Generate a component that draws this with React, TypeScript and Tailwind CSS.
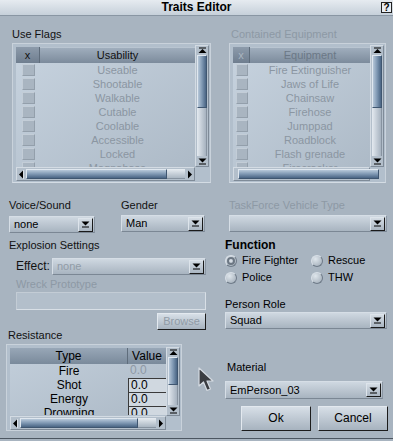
import React from "react";

const useFlags = [
  "Useable",
  "Shootable",
  "Walkable",
  "Cutable",
  "Coolable",
  "Accessible",
  "Locked",
  "Magnabase",
];

const equipment = [
  "Fire Extinguisher",
  "Jaws of Life",
  "Chainsaw",
  "Firehose",
  "Jumppad",
  "Roadblock",
  "Flash grenade",
  "Firecracker",
];

const resistance = [
  { type: "Fire", value: "0.0", disabled: true },
  { type: "Shot", value: "0.0" },
  { type: "Energy", value: "0.0" },
  { type: "Drowning", value: "0.0" },
];

const Tri = ({ down = false, dir }: { down?: boolean; dir?: "left" | "right" }) => {
  if (dir === "left")
    return (
      <svg width="5" height="9" viewBox="0 0 5 9">
        <path d="M0 4.5L4 0.5V8.5Z" fill="#000" />
        <rect x="4" y="0" width="1" height="9" fill="#fff" opacity="0.5" />
      </svg>
    );
  if (dir === "right")
    return (
      <svg width="5" height="9" viewBox="0 0 5 9">
        <path d="M5 4.5L1 0.5V8.5Z" fill="#000" />
      </svg>
    );
  return (
    <svg width="9" height="7" viewBox="0 0 9 7">
      {down ? (
        <>
          <path d="M0.5 0.5H8.5L4.5 4.5Z" fill="#000" />
          <rect x="1" y="5.5" width="7" height="1" fill="#000" />
        </>
      ) : (
        <>
          <rect x="1" y="0.5" width="7" height="1" fill="#000" />
          <path d="M0.5 6H8.5L4.5 2Z" fill="#000" />
        </>
      )}
    </svg>
  );
};

const VScroll = ({ h, thumb }: { h: string; thumb: string }) => (
  <div className={`flex w-[14px] flex-col border border-[#d3dbe3] border-r-[#7f8b98] border-b-[#7f8b98] bg-[#b3bfcb] ${h}`}>
    <div className="flex h-[9px] items-center justify-center">
      <Tri />
    </div>
    <div className="flex flex-1 flex-col px-[1px]">
      <div className={`border border-[#3f5670] border-l-[#dfe7ef] border-t-[#dfe7ef] bg-gradient-to-r from-[#b6c7d8] via-[#7f98b3] to-[#4a6584] ${thumb}`} />
      <div className="flex-1 border-r border-[#8793a0] bg-gradient-to-r from-[#e4eaf0] to-[#a6b2bf]" />
    </div>
    <div className="flex h-[10px] items-center justify-center">
      <Tri down />
    </div>
  </div>
);

const HScroll = ({ w, thumb }: { w: string; thumb: string }) => (
  <div className={`flex h-[14px] items-center border border-[#d3dbe3] border-r-[#7f8b98] border-b-[#7f8b98] bg-[#b3bfcb] px-[2px] ${w}`}>
    <Tri dir="left" />
    <div className="mx-[2px] flex h-[10px] flex-1">
      <div className={`border border-[#3f5670] border-l-[#dfe7ef] border-t-[#dfe7ef] bg-gradient-to-b from-[#b8c9da] via-[#7f98b3] to-[#4a6584] ${thumb}`} />
      <div className="flex-1 border-b border-[#8793a0] bg-gradient-to-b from-[#e8edf2] to-[#aab6c2]" />
    </div>
    <Tri dir="right" />
  </div>
);

const CheckList = ({
  items,
  header,
  w,
  listW,
  xW,
  boxW,
  disabledHeader,
}: {
  items: string[];
  header: string;
  w: string;
  listW: string;
  xW: string;
  boxW: string;
  disabledHeader?: boolean;
}) => (
  <div className={`h-[140px] border border-[#c9d2db] border-b-[#d4dce4] bg-[#b2bfcc] pb-[1px] pl-[3px] pr-[1px] pt-[3px] ${w}`}>
    <div className="flex">
      <div className={`h-[120px] overflow-hidden bg-gradient-to-br from-[#c7d3df] to-[#adbac7] ${listW}`}>
        <div className="flex h-[16px] bg-gradient-to-b from-[#a2b0bf] to-[#7c8b9c]">
          <div
            className={`flex items-center justify-center border-r border-[#5e6c7b] bg-gradient-to-b from-[#8d9bab] to-[#6f7e8f] ${xW} ${
              disabledHeader ? "text-[#aab5c0]" : "text-[#111]"
            }`}
          >
            x
          </div>
          <div
            className={`flex flex-1 items-center justify-center border-t border-[#b9c5d1] ${
              disabledHeader ? "text-[#6b7886]" : "text-[#111]"
            }`}
          >
            {header}
          </div>
        </div>
        {items.map((it) => (
          <div key={it} className="flex h-[14px] items-center">
            <div className={`flex justify-center ${xW}`}>
              <div className={`h-[12px] border border-[#c3cdd7] border-b-[#939fab] border-r-[#939fab] bg-[#a9b5c1] ${boxW}`} />
            </div>
            <div className="flex-1 text-center leading-[14px] text-[#8b96a2]">{it}</div>
          </div>
        ))}
      </div>
      <VScroll h="h-[122px] -mt-[2px]" thumb="h-[53px]" />
    </div>
    <div className="flex">
      <HScroll w={listW} thumb="w-[141px]" />
    </div>
  </div>
);

const DropBtn = () => (
  <div className="mr-[1px] flex h-[14px] w-[15px] items-center justify-center border border-[#dde4eb] border-b-[#1a1a1a] border-r-[#1a1a1a] bg-gradient-to-b from-[#d4dce4] to-[#aab6c2]">
    <Tri down />
  </div>
);

const Select = ({
  value,
  w,
  h = "h-[17px]",
  disabled,
}: {
  value: string;
  w: string;
  h?: string;
  disabled?: boolean;
}) => (
  <div
    className={`flex items-center border border-[#d6dee6] border-b-[#7b8794] border-r-[#8a96a3] bg-gradient-to-b from-[#cfd8e1] to-[#a8b4c0] pl-[4px] ${w} ${h}`}
  >
    <span className={`flex-1 leading-[13px] ${disabled ? "text-[#909ba6]" : "text-[#000]"}`}>{value}</span>
    <DropBtn />
  </div>
);

const Radio = ({ label, checked }: { label: string; checked?: boolean }) => (
  <div className="flex h-[15px] items-center">
    <div className="flex h-[12px] w-[12px] items-center justify-center rounded-full border border-[#d9e0e7] border-b-[#6f7b88] border-r-[#6f7b88] bg-[radial-gradient(circle_at_35%_30%,#dfe6ec,#9ca8b4)]">
      {checked && (
        <div className="flex h-[8px] w-[8px] items-center justify-center rounded-full border-2 border-[#6c7783]">
          <div className="h-[2px] w-[2px] rounded-full bg-[#d8dfe6]" />
        </div>
      )}
    </div>
    <span className="ml-[5px] text-[#000]">{label}</span>
  </div>
);

const Button = ({ label, w, h, disabled }: { label: string; w: string; h: string; disabled?: boolean }) => (
  <div
    className={`flex items-center justify-center border border-[#e3e9ef] border-b-[#1c1c1c] border-r-[#1c1c1c] bg-gradient-to-b from-[#d7dfe7] to-[#a7b3bf] ${w} ${h} ${
      disabled ? "text-[#909ba6]" : "text-[#000]"
    }`}
  >
    {label}
  </div>
);

const Cursor = () => (
  <svg className="absolute left-[197px] top-[367px]" width="20" height="26" viewBox="0 0 20 26">
    <path
      d="M2 1L2 19L6.5 15L10 23.5L13.5 22L10 14L16 14Z"
      fill="#3a3d42"
      stroke="#d5dbe2"
      strokeWidth="1.2"
      strokeLinejoin="round"
    />
  </svg>
);

const App = () => {
  return (
    <div className="relative h-[441px] w-[393px] overflow-hidden bg-[#a8b4c0] font-['Liberation_Sans',Arial,sans-serif] text-[11px] leading-[13px] text-[#111]">
      {/* title bar */}
      <div className="grid h-[16px] grid-cols-[1fr_auto_1fr] items-center border-b border-b-[#8996a3] bg-gradient-to-b from-[#e6ebf0] to-[#c6d0da]">
        <div />
        <div className="text-[12px] font-bold text-[#000]">Traits Editor</div>
        <div className="mr-[1px] flex h-[11px] w-[11px] items-center justify-center justify-self-end border border-[#222] bg-[#e9eef3] text-[10px] font-bold leading-none text-[#000]">
          ?
        </div>
      </div>

      {/* lists */}
      <div className="mt-[12px] flex pl-[12px]">
        <div className="w-[199px]">
          <div>Use Flags</div>
          <div className="mt-[2px]">
            <CheckList
              items={useFlags}
              header="Usability"
              w="w-[199px]"
              listW="w-[179px]"
              xW="w-[24px]"
              boxW="w-[13px]"
            />
          </div>
        </div>
        <div className="ml-[18px] w-[157px]">
          <div className="pl-[2px] text-[#8d99a5]">Contained Equipment</div>
          <div className="mt-[2px]">
            <CheckList
              items={equipment}
              header="Equipment"
              w="w-[157px]"
              listW="w-[137px]"
              xW="w-[17px]"
              boxW="w-[12px]"
              disabledHeader
            />
          </div>
        </div>
      </div>

      {/* voice / gender / taskforce */}
      <div className="mt-[16px] flex pl-[9px]">
        <div className="w-[86px]">
          <div>Voice/Sound</div>
          <div className="mt-[4px]">
            <Select value="none" w="w-[86px]" />
          </div>
        </div>
        <div className="ml-[26px] w-[84px]">
          <div>Gender</div>
          <div className="mt-[3px]">
            <Select value="Man" w="w-[84px]" />
          </div>
        </div>
        <div className="ml-[24px] w-[158px]">
          <div className="text-[#8d99a5]">TaskForce Vehicle Type</div>
          <div className="mt-[3px]">
            <Select value="" w="w-[158px]" />
          </div>
        </div>
      </div>

      {/* bottom part */}
      <div className="mt-[6px] flex">
        <div className="flex w-[211px] flex-col pl-[6px]">
          <div className="ml-[3px]">Explosion Settings</div>
          <div className="ml-[10px] mt-[6px] flex items-center">
            <div className="w-[36px] text-[12px]">Effect:</div>
            <Select value="none" w="w-[154px]" disabled />
          </div>
          <div className="ml-[10px] mt-[3px] text-[#8d99a5]">Wreck Prototype</div>
          <div className="ml-[10px] mt-[1px] h-[18px] w-[190px] border border-[#c3ccd5] border-b-[#d8dfe6] border-r-[#d8dfe6] bg-[#b3bfcb]" />
          <div className="mt-[3px] flex w-[200px] justify-end">
            <Button label="Browse" w="w-[49px]" h="h-[17px]" disabled />
          </div>
          <div className="-mt-[1px] ml-[2px]">Resistance</div>
          <div className="mt-[2px] h-[87px] w-[176px] border border-[#c9d2db] bg-[#b2bfcc] pb-[1px] pl-[3px] pr-[1px] pt-[3px]">
            <div className="flex">
              <div className="h-[67px] w-[156px] overflow-hidden bg-gradient-to-br from-[#c3cfdb] to-[#adbac7]">
                <div className="flex h-[16px] bg-gradient-to-b from-[#98a7b7] to-[#7a8a9b] text-[12px] text-[#000]">
                  <div className="flex w-[118px] items-center justify-center border-r border-[#5f6d7c]">Type</div>
                  <div className="flex flex-1 items-center justify-center">Value</div>
                </div>
                {resistance.map((r) => (
                  <div key={r.type} className="flex h-[14px] items-center text-[12px]">
                    <div className="w-[118px] text-center text-[#000]">{r.type}</div>
                    <div
                      className={`h-[14px] flex-1 pl-[2px] leading-[13px] ${
                        r.disabled
                          ? "text-[#8e99a5]"
                          : "border-l border-t border-[#3a3a3a] border-b-[#e6ebf0] bg-[#d0d8e0] text-[#000]"
                      }`}
                    >
                      {r.value}
                    </div>
                  </div>
                ))}
              </div>
              <VScroll h="h-[69px] -mt-[1px]" thumb="h-[28px]" />
            </div>
            <div className="flex">
              <HScroll w="w-[156px]" thumb="w-[118px]" />
            </div>
          </div>
        </div>

        <div className="ml-[14px] flex w-[163px] flex-col">
          <div className="text-[12px] font-bold text-[#000]">Function</div>
          <div className="mt-[1px] grid grid-cols-[86px_1fr] gap-y-[2px]">
            <Radio label="Fire Fighter" checked />
            <Radio label="Rescue" />
            <Radio label="Police" />
            <Radio label="THW" />
          </div>
          <div className="mt-[13px] text-[#000]">Person Role</div>
          <div className="mt-[1px]">
            <Select value="Squad" w="w-[162px]" />
          </div>
          <div className="ml-[2px] mt-[32px] text-[#000]">Material</div>
          <div className="mt-[7px]">
            <Select value="EmPerson_03" w="w-[158px]" h="h-[18px]" />
          </div>
          <div className="mt-[7px] flex gap-[7px] pl-[16px] text-[12px]">
            <Button label="Ok" w="w-[70px]" h="h-[25px]" />
            <Button label="Cancel" w="w-[70px]" h="h-[25px]" />
          </div>
        </div>
      </div>

      <div className="absolute bottom-[2px] left-0 h-[1px] w-full bg-[#4c5661]" />
      <Cursor />
    </div>
  );
};

export default App;
